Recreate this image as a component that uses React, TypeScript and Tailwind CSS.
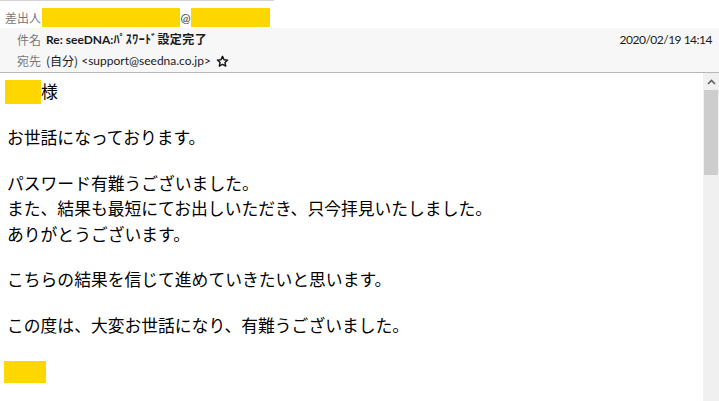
import React from 'react';

const jp = { fontFamily: '"Noto Sans CJK JP", "Noto Sans", sans-serif' };
const ui = { fontFamily: 'Lato, "Noto Sans CJK JP", sans-serif' };

function Redact({ className }: { className: string }) {
  return <span className={`inline-block bg-[#ffd700] ${className}`} />;
}

function HeaderRow({ label, children }: { label: string; children: React.ReactNode }) {
  return (
    <div className="flex items-center h-[22px] pl-[17px]">
      <span className="text-[12px] text-[#777] w-[29px] shrink-0" style={jp}>{label}</span>
      {children}
    </div>
  );
}

const body: (string | null)[] = [
  'お世話になっております。',
  null,
  'パスワード有難うございました。',
  'また、結果も最短にてお出しいただき、只今拝見いたしました。',
  'ありがとうございます。',
  null,
  'こちらの結果を信じて進めていきたいと思います。',
  null,
  'この度は、大変お世話になり、有難うございました。',
  null,
];

export default function App() {
  return (
    <div className="w-[719px] h-[401px] bg-white overflow-hidden flex flex-col text-black" style={jp}>
      {/* header */}
      <div className="h-px w-[274px] bg-[#d4d4d4]" />
      <div className="flex items-center h-[27px] pl-[5px] pt-[6px]">
        <span className="text-[12px] text-[#777] w-[37px] shrink-0" style={jp}>差出人</span>
        <Redact className="w-[138px] h-[19px]" />
        <span className="text-[12px] text-[#333] w-[11px] text-center" style={ui}>@</span>
        <Redact className="w-[79px] h-[19px]" />
      </div>
      <div className="bg-[#f7f7f7] h-[45px] flex flex-col pt-[1px] border-b border-[#b8b8b8]">
        <HeaderRow label="件名">
          <span className="text-[12px] font-bold text-[#1a1a1a]" style={ui}>Re: seeDNA:<span className="tracking-[0.4px]" style={jp}>ﾊﾟｽﾜｰﾄﾞ設定完了</span></span>
          <span className="ml-auto pr-[7px] text-[12px] tracking-[-0.5px] text-[#1a1a1a]" style={ui}>2020/02/19 14:14</span>
        </HeaderRow>
        <HeaderRow label="宛先">
          <span className="text-[12px] text-[#1a1a1a] flex items-center" style={ui}>
            <span style={jp}>(自分)</span>&nbsp;&lt;support@seedna.co.jp&gt;
            <svg width="13" height="13" viewBox="0 0 24 24" className="ml-[5px]" fill="none" stroke="#111" strokeWidth="2.6" strokeLinejoin="round">
              <path d="M12 2.5l2.9 6.2 6.6.7-4.9 4.5 1.4 6.6L12 17.1l-5.9 3.4 1.4-6.6-4.9-4.5 6.6-.7z" />
            </svg>
          </span>
        </HeaderRow>
      </div>

      {/* body */}
      <div className="flex-1 flex min-h-0">
        <div className="flex-1 pt-[6px] pl-[7px] text-[16.8px] leading-[25px]">
          <div className="flex items-center h-[25px] -ml-[2px]">
            <Redact className="w-[36px] h-[24px]" />
            <span>様</span>
          </div>
          <div className="h-[21px]" />
          {body.map((line, i) =>
            line === null ? <div key={i} className="h-[20px]" /> : <div key={i} className="h-[25.5px]">{line}</div>
          )}
          <div className="-ml-[3px] pt-[3px]">
            <Redact className="w-[42px] h-[22px] block" />
          </div>
        </div>
        {/* scrollbar */}
        <div className="w-[16px] bg-[#f0f0f0] flex flex-col">
          <div className="h-[17px] flex items-center justify-center">
            <svg width="9" height="6" viewBox="0 0 9 6" fill="none" stroke="#606060" strokeWidth="1.6">
              <path d="M1 5l3.5-3.5L8 5" />
            </svg>
          </div>
          <div className="h-[85px] mx-[1px] bg-[#cdcdcd]" />
        </div>
      </div>
    </div>
  );
}
